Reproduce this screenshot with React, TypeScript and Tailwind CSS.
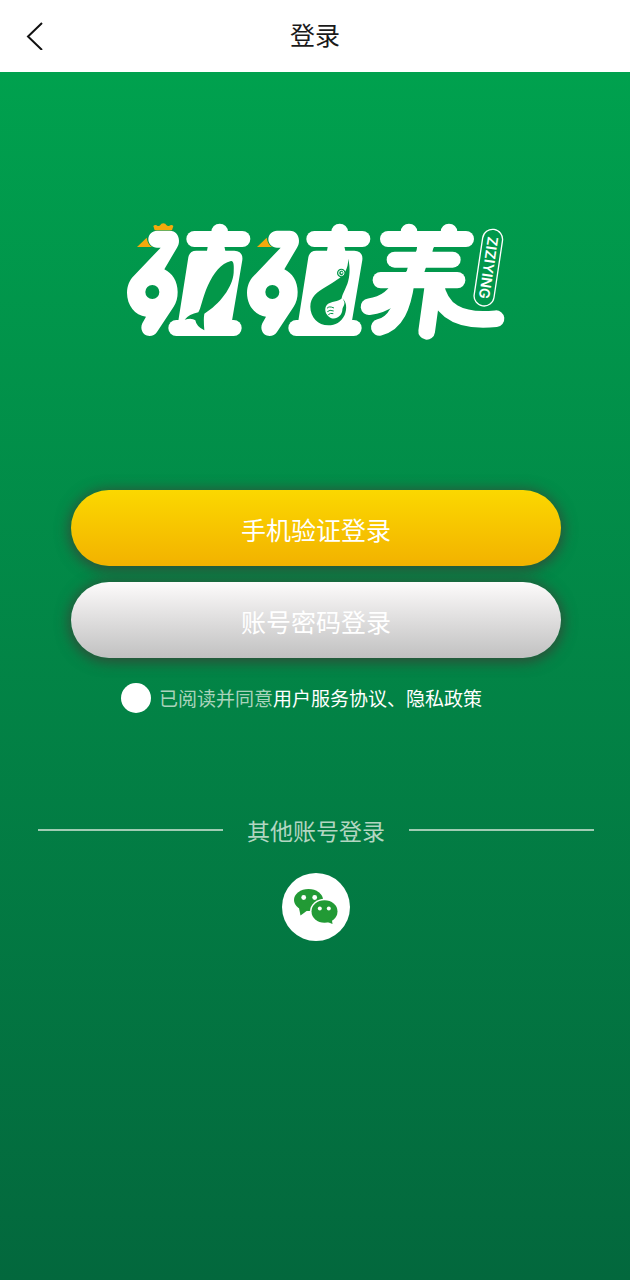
import React from "react";

function Duck() {
  return (
    <g>
      <path
        fillRule="evenodd"
        d="M126 62H164C182 62 192 76 192 92C192 100 190 106 186 113L148 178C172 190 188 214 188 246C188 264 184 278 176 290L126 366C118 379 100 382 88 373C78 364 77 350 82 340L93 320C60 316 36 286 36 248C36 228 44 210 56 198L137 113H126C112 113 100 102 100 88S112 62 126 62ZM112 225A21 21 0 1 0 112 267A21 21 0 1 0 112 225Z"
        fill="#fff"
      />
      <path d="M66 111L95 83Q98 104 112 111Z" fill="#f5a90c" />
    </g>
  );
}

function Stand() {
  return (
    <g fill="#fff">
      <rect x="214" y="63" width="192" height="48" rx="24" />
      <circle cx="314" cy="66" r="25" />
      <path d="M280 100H326L331 122H358Q385 124 382 150L351 332H190L220 142Q224 122 244 122H276Z" />
      <rect x="160" y="330" width="220" height="48" rx="24" />
    </g>
  );
}

function Logo() {
  return (
    <svg viewBox="121 215 390 130" className="w-[390px] max-w-full" role="img" aria-label="殖殖养 ZIZIYING">
      <g transform="translate(115 210) scale(0.33333)">
        <Duck />
        <path d="M119 61L115 48Q121 42 128 48Q134 49 136 45Q138 40 145 40Q152 40 154 45Q157 49 162 48Q170 42 175 48L171 61Z" fill="#f5a90c" />
        <Stand />
        <path
          d="M348 153C357 152 357 168 356 188C353 232 314 282 268 311Q265 326 268 361Q244 350 241 331Q231 323 209 329Q222 313 250 307C258 296 262 263 279 226C295 190 318 160 348 153Z"
          fill="#039749"
        />
      </g>
      <g transform="translate(235 210) scale(0.33333)">
        <Duck />
        <Stand />
        <path
          d="M340 146C346 176 345 199 337 222C329 242 322 253 320 265C335 272 337 296 329 315C318 337 301 346 280 346C249 346 226 321 226 290C226 261 246 246 273 230C297 215 318 204 329 188C338 173 339 160 340 146Z"
          fill="#039749"
        />
        <path d="M322 263C310 277 288 272 276 284C266 295 271 315 286 323C302 331 320 319 322 301C322 291 330 286 328 276Z" fill="#fff" />
        <path d="M276 295Q282 287 297 294M277 305Q284 298 296 303M280 314Q286 308 295 311" fill="none" stroke="#039749" strokeWidth="3" />
        <circle cx="319" cy="189" r="13" fill="#039749" />
        <circle cx="319" cy="189" r="8" fill="none" stroke="#fff" strokeWidth="3" />
        <circle cx="320" cy="188" r="3" fill="#fff" />
      </g>
      <g transform="translate(370 210) scale(0.33333)">
        <g fill="#fff">
          <circle cx="117" cy="66" r="25" />
          <circle cx="237" cy="66" r="25" />
          <rect x="30" y="63" width="282" height="48" rx="24" />
          <rect x="50" y="125" width="222" height="48" rx="24" />
          <rect x="8" y="186" width="278" height="49" rx="24" />
          <path d="M146 106H196Q188 114 187 130L168 172L162 190H104Q112 184 114 170L136 130Q141 122 142 106Z" />
        </g>
        <g fill="none" stroke="#fff" strokeWidth="50" strokeLinecap="round">
          <path d="M96 214C80 256 50 284 -3 290" />
          <path d="M109 214C98 290 78 340 28 352" />
          <path d="M190 220L170 364" />
          <path d="M196 220C210 302 266 338 378 326" />
        </g>
        <g transform="translate(355 173) rotate(8.5)">
          <rect x="-30" y="-116" width="60" height="232" rx="30" fill="none" stroke="#fff" strokeWidth="4" />
          <text
            transform="rotate(90)"
            x="0"
            y="15"
            textAnchor="middle"
            fill="#fff"
            fontSize="43"
            fontWeight="600"
            fontFamily="Inter, sans-serif"
          >
            ZIZIYING
          </text>
        </g>
      </g>
    </svg>
  );
}

function WeChatIcon() {
  return (
    <svg viewBox="0 0 68 68" className="size-[68px]" aria-hidden="true">
      <g fill="#229a35">
        <ellipse cx="26.500" cy="27" rx="14.500" ry="11" />
        <path d="M17 35L18.500 42.500L26 37Z" />
      </g>
      <ellipse cx="42.500" cy="38.500" rx="14.500" ry="12.700" fill="#fff" />
      <g fill="#229a35">
        <ellipse cx="42.500" cy="38.500" rx="13" ry="11.200" />
        <path d="M43 48L50.500 51L49.500 44Z" />
      </g>
      <g fill="#fff">
        <circle cx="21.700" cy="24.500" r="2.400" />
        <circle cx="32.700" cy="24.500" r="2.400" />
        <circle cx="37.800" cy="35.500" r="2" />
        <circle cx="46.800" cy="35.500" r="2" />
      </g>
    </svg>
  );
}

const loginButton =
  "h-[76px] w-full rounded-full pt-1 text-[25px] text-white shadow-[0_2px_14px_2px_rgba(70,50,50,0.7)]";

export default function App() {
  return (
    <div className="flex min-h-screen flex-col font-['Noto_Sans_CJK_SC',sans-serif]">
      <header className="grid h-[72px] grid-cols-[1fr_auto_1fr] items-center bg-white px-6">
        <button type="button" aria-label="返回" className="w-6">
          <svg viewBox="0 0 24 28" className="h-7 w-6" fill="none" stroke="#111" strokeWidth="2">
            <path d="M18 1L4 14.500L18 28" />
          </svg>
        </button>
        <h1 className="pb-0.5 text-[25px] text-[#1a1a1a]">登录</h1>
      </header>

      <main className="flex grow flex-col items-center bg-linear-to-b from-[#00a14e] to-[#03683d] pt-[143px] pl-0.5">
        <Logo />

        <div className="mt-[145px] flex w-full flex-col gap-4 px-[69px]">
          <button type="button" className={`${loginButton} bg-linear-to-b from-[#fbd800] to-[#f2b200]`}>
            手机验证登录
          </button>
          <button type="button" className={`${loginButton} bg-linear-to-b from-[#fdfbfb] to-[#c1c1c1]`}>
            账号密码登录
          </button>
        </div>

        <div className="mt-6 flex w-full items-center gap-2 pl-[119px] text-[19px] leading-8 text-white">
          <input
            id="agree"
            type="checkbox"
            className="size-[30px] shrink-0 appearance-none rounded-full bg-white checked:border-8 checked:border-[#f2b200]"
          />
          <p className="whitespace-nowrap">
            <label htmlFor="agree" className="text-[#a9d3bb]">已阅读并同意</label>
            <a href="#service">用户服务协议</a>、<a href="#privacy">隐私政策</a>
          </p>
        </div>

        <div className="mt-[100px] flex w-full items-center gap-6 px-9">
          <span className="h-0.5 grow bg-[#9fccb3]" />
          <h2 className="text-[23px] leading-8 text-[#b2d6c1]">其他账号登录</h2>
          <span className="h-0.5 grow bg-[#9fccb3]" />
        </div>

        <button type="button" aria-label="微信登录" className="mt-[27px] rounded-full bg-white">
          <WeChatIcon />
        </button>
      </main>
    </div>
  );
}
